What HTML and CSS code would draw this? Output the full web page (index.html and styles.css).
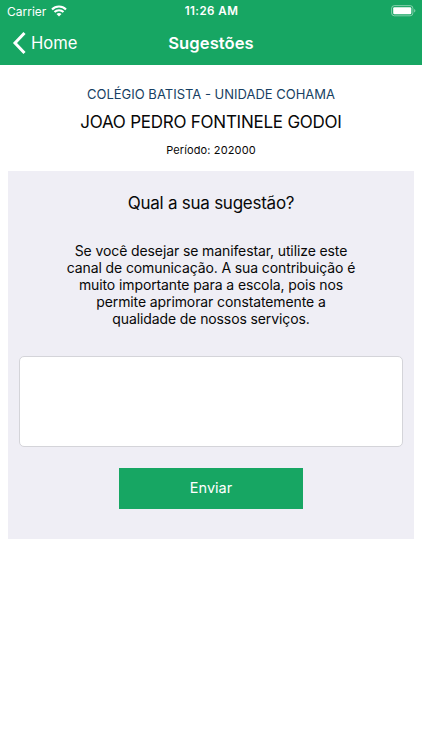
FILE: index.html
```html
<!DOCTYPE html>
<html lang="pt-BR">
<head>
<meta charset="utf-8">
<meta name="viewport" content="width=device-width, initial-scale=1">
<title>Sugestões</title>
<link rel="stylesheet" href="styles.css">
</head>
<body>
<header class="header">
  <div class="status">
    <div class="carrier"><span>Carrier</span>
      <svg class="wifi" width="16" height="12" viewBox="0 0 16 12" fill="none" stroke="#fff" stroke-width="2.1"><path d="M1 4.4a10 10 0 0 1 14 0M3.5 7.1a6.4 6.4 0 0 1 9 0"/><path d="M8 11.6 5.5 9.1a3.6 3.6 0 0 1 5 0z" fill="#fff" stroke="none"/></svg>
    </div>
    <span class="time">11:26 AM</span>
    <svg class="battery" width="25" height="12" viewBox="0 0 25 12"><rect x=".6" y=".6" width="21.3" height="10.2" rx="2.8" fill="none" stroke="#fff" stroke-opacity=".45"/><rect x="2.2" y="2.2" width="18.1" height="7" rx="1.2" fill="#fff"/><path d="M23.2 3.9c1.6.7 1.6 2.900 0 3.6z" fill="#fff" fill-opacity=".5"/></svg>
  </div>
  <nav class="nav">
    <a class="back"><svg width="14" height="24" viewBox="0 0 14 24" fill="none" stroke="#fff" stroke-width="3"><path d="M12.5 2 3 12l9.500 10"/></svg><span>Home</span></a>
    <h1 class="title">Sugestões</h1>
  </nav>
</header>
<main>
  <section class="student">
    <p class="school">COLÉGIO BATISTA - UNIDADE COHAMA</p>
    <p class="name">JOAO PEDRO FONTINELE GODOI</p>
    <p class="period">Período: 202000</p>
  </section>
  <form class="card">
    <h2 class="question">Qual a sua sugestão?</h2>
    <p class="intro">Se você desejar se manifestar, utilize este<br>canal de comunicação. A sua contribuição é<br>muito importante para a escola, pois nos<br>permite aprimorar constatemente a<br>qualidade de nossos serviços.</p>
    <textarea class="message" aria-label="Sugestão"></textarea>
    <button class="send" type="button">Enviar</button>
  </form>
</main>
</body>
</html>
```
FILE: styles.css
```css
* { box-sizing: border-box; }
body { margin: 0; background: #fff; color: #080808; font-family: Inter, "Liberation Sans", sans-serif; }
h1, h2, p { margin: 0; font-weight: 400; }
svg { display: block; }
.header { height: 65.4px; background: #17a663; color: #fff; }
.status { display: grid; grid-template-columns: 1fr auto 1fr; align-items: center; height: 22px; padding: 0 6px 0 7px; font-size: 12px; }
.carrier { display: flex; align-items: center; gap: 5px; }
.time { font-weight: 600; font-size: 11.6px; letter-spacing: .42px; }
.battery { justify-self: end; }
.nav { display: grid; grid-template-columns: 1fr auto 1fr; align-items: center; height: 42px; padding: 0 12px; }
.back { display: flex; align-items: center; gap: 5px; font-size: 16.6px; }
.title { font-size: 16.6px; font-weight: 600; letter-spacing: .05px; }
.student { height: 105.6px; padding-top: 19px; text-align: center; }
.school { color: #173f63; font-size: 13px; line-height: 21px; }
.name { font-size: 17px; line-height: 24px; margin-top: 5px; letter-spacing: -.24px; }
.period { font-size: 11px; line-height: 16px; margin-top: 8px; letter-spacing: .13px; }
.card { display: flex; flex-direction: column; align-items: center; margin: 0 8.4px; padding: 20px 10.200px 0; height: 368px; background: #efeef5; text-align: center; }
.question { font-size: 17px; line-height: 24px; letter-spacing: -.25px; }
.intro { margin-top: 27px; font-size: 14px; line-height: 17px; letter-spacing: -.11px; white-space: nowrap; }
.message { width: 100%; height: 91.5px; margin-top: 29px; border: 1.5px solid #d4d4d9; border-radius: 5px; background: #fff; resize: none; }
.send { width: 183.2px; height: 41px; margin-top: 20.5px; padding: 0 0 1px; border: 0; background: #17a663; color: #fff; font: 400 14.5px Inter, sans-serif; }
```
